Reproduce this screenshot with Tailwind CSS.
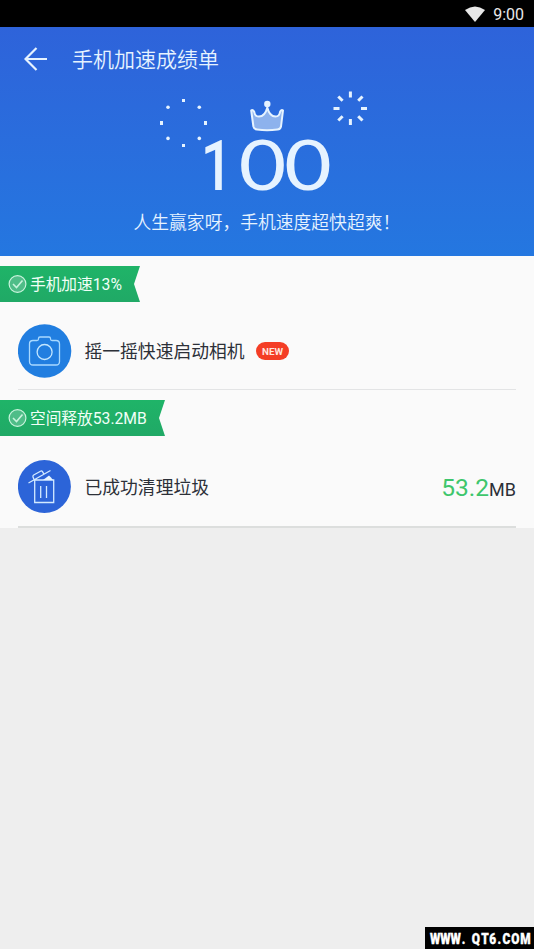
<!DOCTYPE html>
<html lang="zh-CN">
<head>
<meta charset="utf-8">
<title>手机加速成绩单</title>
<script src="https://cdn.jsdelivr.net/npm/@tailwindcss/browser@4"></script>
</head>
<body class="relative flex h-[949px] w-[534px] flex-col overflow-hidden bg-[#eeeeee] font-[Roboto,'Noto_Sans_CJK_SC',sans-serif] text-[#2c3038]">
  <div class="flex h-[27px] shrink-0 items-center justify-end gap-2 bg-black pr-[10px] text-[#e8e8e8]">
    <svg class="h-4 w-5" viewBox="0 0 20 16" fill="currentColor"><path d="M0 4Q10-3 20 4L10 16Z"/></svg>
    <span class="pt-[2px] text-[16px] leading-6">9:00</span>
  </div>
  <header class="flex h-[229px] shrink-0 flex-col bg-linear-to-b from-[#2e63da] to-[#2477e0] text-[#e6f3ff]">
    <div class="flex h-16 items-center pl-6">
      <svg class="h-6 w-6" viewBox="0 0 24 24" fill="none" stroke="currentColor" stroke-width="2.2"><path d="M12.5 1L1.5 12L12.5 23M1.5 12H23"/></svg>
      <h1 class="ml-[24px] pt-[2px] text-[21px] leading-8 font-[350]">手机加速成绩单</h1>
    </div>
    <svg class="h-[109px] w-[534px] overflow-visible" viewBox="0 91 534 109" fill="none" stroke="#e6f3ff">
      <g fill="#e6f3ff" stroke="none">
        <path d="M182 99h3v3h-3zM182 144h3v3h-3zM160 121h3v4h-3zM204 121h3v4h-3z"/>
        <circle cx="168" cy="107.3" r="1.8"/><circle cx="199.3" cy="107.3" r="1.8"/><circle cx="168" cy="138.4" r="1.8"/><circle cx="199.3" cy="138.4" r="1.8"/>
        <circle cx="267.3" cy="104" r="3.2"/>
      </g>
      <path stroke-width="3" d="M350.4 91.5v6M350.4 119v6M333.500 108.500h6M361 108.500h6M338.300 96.500l4.300 4.300M362.500 96.500l-4.300 4.300M338.300 120.500l4.300-4.300M362.500 120.500l-4.300-4.300"/>
      <path fill="#8db2ed" stroke-width="2" stroke-linejoin="round" d="M251.200 110.500L253.400 126.500Q254 129.300 257 129.500Q267 130.800 277.500 129.500Q280.400 129.200 281 126.500L283 110.500Q281.500 109 280 112Q279.500 116.500 275.500 116.500Q269.500 116.500 267.300 107.500Q265 116.500 259 116.500Q254.800 116.500 254.300 112Q252.700 109 251.200 110.500Z"/>
      <g fill="#e6f3ff" stroke="none">
        <text class="font-[Roboto,sans-serif] font-medium" font-size="70" transform="translate(200.800 190) scale(.8 1)">1</text>
        <g class="font-[Lato,sans-serif] font-normal" font-size="70" text-anchor="middle">
          <text transform="translate(262.500 190) scale(1.170 1)">0</text>
          <text transform="translate(308 190) scale(1.170 1)">0</text>
        </g>
      </g>
    </svg>
    <p class="pl-[133.500px] pt-[9px] text-[17.8px] leading-7 font-[350] whitespace-nowrap">人生赢家呀，手机速度超快超爽！</p>
  </header>
  <main class="h-[272px] shrink-0 bg-[#fafafa] pt-[10px]">
    <div class="flex h-9 w-[140px] items-center bg-linear-to-b from-[#1fb468] to-[#20a966] pl-2 text-[#f1fff7] [clip-path:polygon(0_0,100%_0,134px_50%,100%_100%,0_100%)]">
      <svg class="mr-[3px] h-[19px] w-[19px]" viewBox="0 0 19 19" fill="#4fbd88" stroke="#c8f3dc" stroke-width="1.2"><circle cx="9.500" cy="9" r="8.400"/><path fill="none" stroke-width="1.6" d="M5 9l3.500 3.500 6-7"/></svg>
      <span class="pt-[2px] text-[15.7px] leading-6 whitespace-nowrap">手机加速13%</span>
    </div>
    <div class="mx-[18px] flex h-[88px] items-center border-b border-[#e3e4e5] pt-[10px]">
      <svg class="h-[54px] w-[54px]" viewBox="0 0 54 54" fill="none" stroke="#a9d9ff" stroke-width="1.3"><circle cx="26.600" cy="27" r="26.700" fill="#217ee0" stroke="none"/><path d="M15 16.500h4q1.500 0 1.500-1.500v-.5q0-1.500 1.500-1.500h9q1.500 0 1.500 1.500v.5q0 1.500 1.500 1.500h4q3.500 0 3.500 3.500v17.500q0 3.500-3.500 3.500H15q-3.500 0-3.500-3.500V20q0-3.500 3.500-3.500Z"/><circle cx="26.600" cy="28" r="7.500" stroke="#c3e6ff"/></svg>
      <span class="ml-[12.500px] pt-[2px] text-[17.8px] leading-7">摇一摇快速启动相机</span>
      <span class="ml-[11.500px] flex h-[18px] w-[33px] items-center justify-center rounded-full bg-[#f43d25] pt-[2px] text-[9.8px] leading-none font-bold text-[#ffe4df]">NEW</span>
    </div>
    <div class="mt-[10px] flex h-9 w-[165px] items-center bg-linear-to-b from-[#1fb468] to-[#20a966] pl-2 text-[#f1fff7] [clip-path:polygon(0_0,100%_0,159px_50%,100%_100%,0_100%)]">
      <svg class="mr-[3px] h-[19px] w-[19px]" viewBox="0 0 19 19" fill="#4fbd88" stroke="#c8f3dc" stroke-width="1.2"><circle cx="9.500" cy="9" r="8.400"/><path fill="none" stroke-width="1.6" d="M5 9l3.500 3.500 6-7"/></svg>
      <span class="pt-[2px] text-[15.7px] leading-6 whitespace-nowrap">空间释放53.2MB</span>
    </div>
    <div class="mx-[18px] flex h-[92px] items-center border-b-2 border-[#dcdedd] pt-[11px]">
      <svg class="h-[54px] w-[54px]" viewBox="0 0 54 54" fill="none" stroke="#d3eaff" stroke-width="1.3"><circle cx="26.400" cy="26.500" r="26.500" fill="#2c64d8" stroke="none"/><path d="M16.700 20h19v22.500h-19zM22.700 26v12M28.500 26v12M10.500 23L32.500 10.500M16 19.500l-1-2.500q-.5-1.300.7-2l6.800-3.800q1.300-.7 2 .5l1.300 2.200"/><path fill="#e8f5ff" stroke="none" d="M25 20l4-3 2-1.500 2 2 2 2.500z"/></svg>
      <span class="ml-[12.500px] pt-[2px] text-[17.8px] leading-7">已成功清理垃圾</span>
      <span class="ml-auto flex items-baseline pt-[4px] text-[18px] leading-8"><span class="text-[24.500px] font-normal text-[#3ec66c]">53.2</span>MB</span>
    </div>
  </main>
  <div class="absolute right-0 bottom-0 flex h-[22px] w-[109px] items-center justify-center bg-black text-white">
    <svg class="h-[22px] w-[109px]" viewBox="0 0 109 22"><text class="font-[Roboto,sans-serif] font-black" transform="scale(.78 1)" x="6.400 19.500 32.600 47 60 72 82.500 93 99.500 110.500 122" y="17.300" font-size="15.200" fill="#fff" stroke="#fff" stroke-width=".4">WWW.QT6.COM</text></svg>
  </div>
</body>
</html>
